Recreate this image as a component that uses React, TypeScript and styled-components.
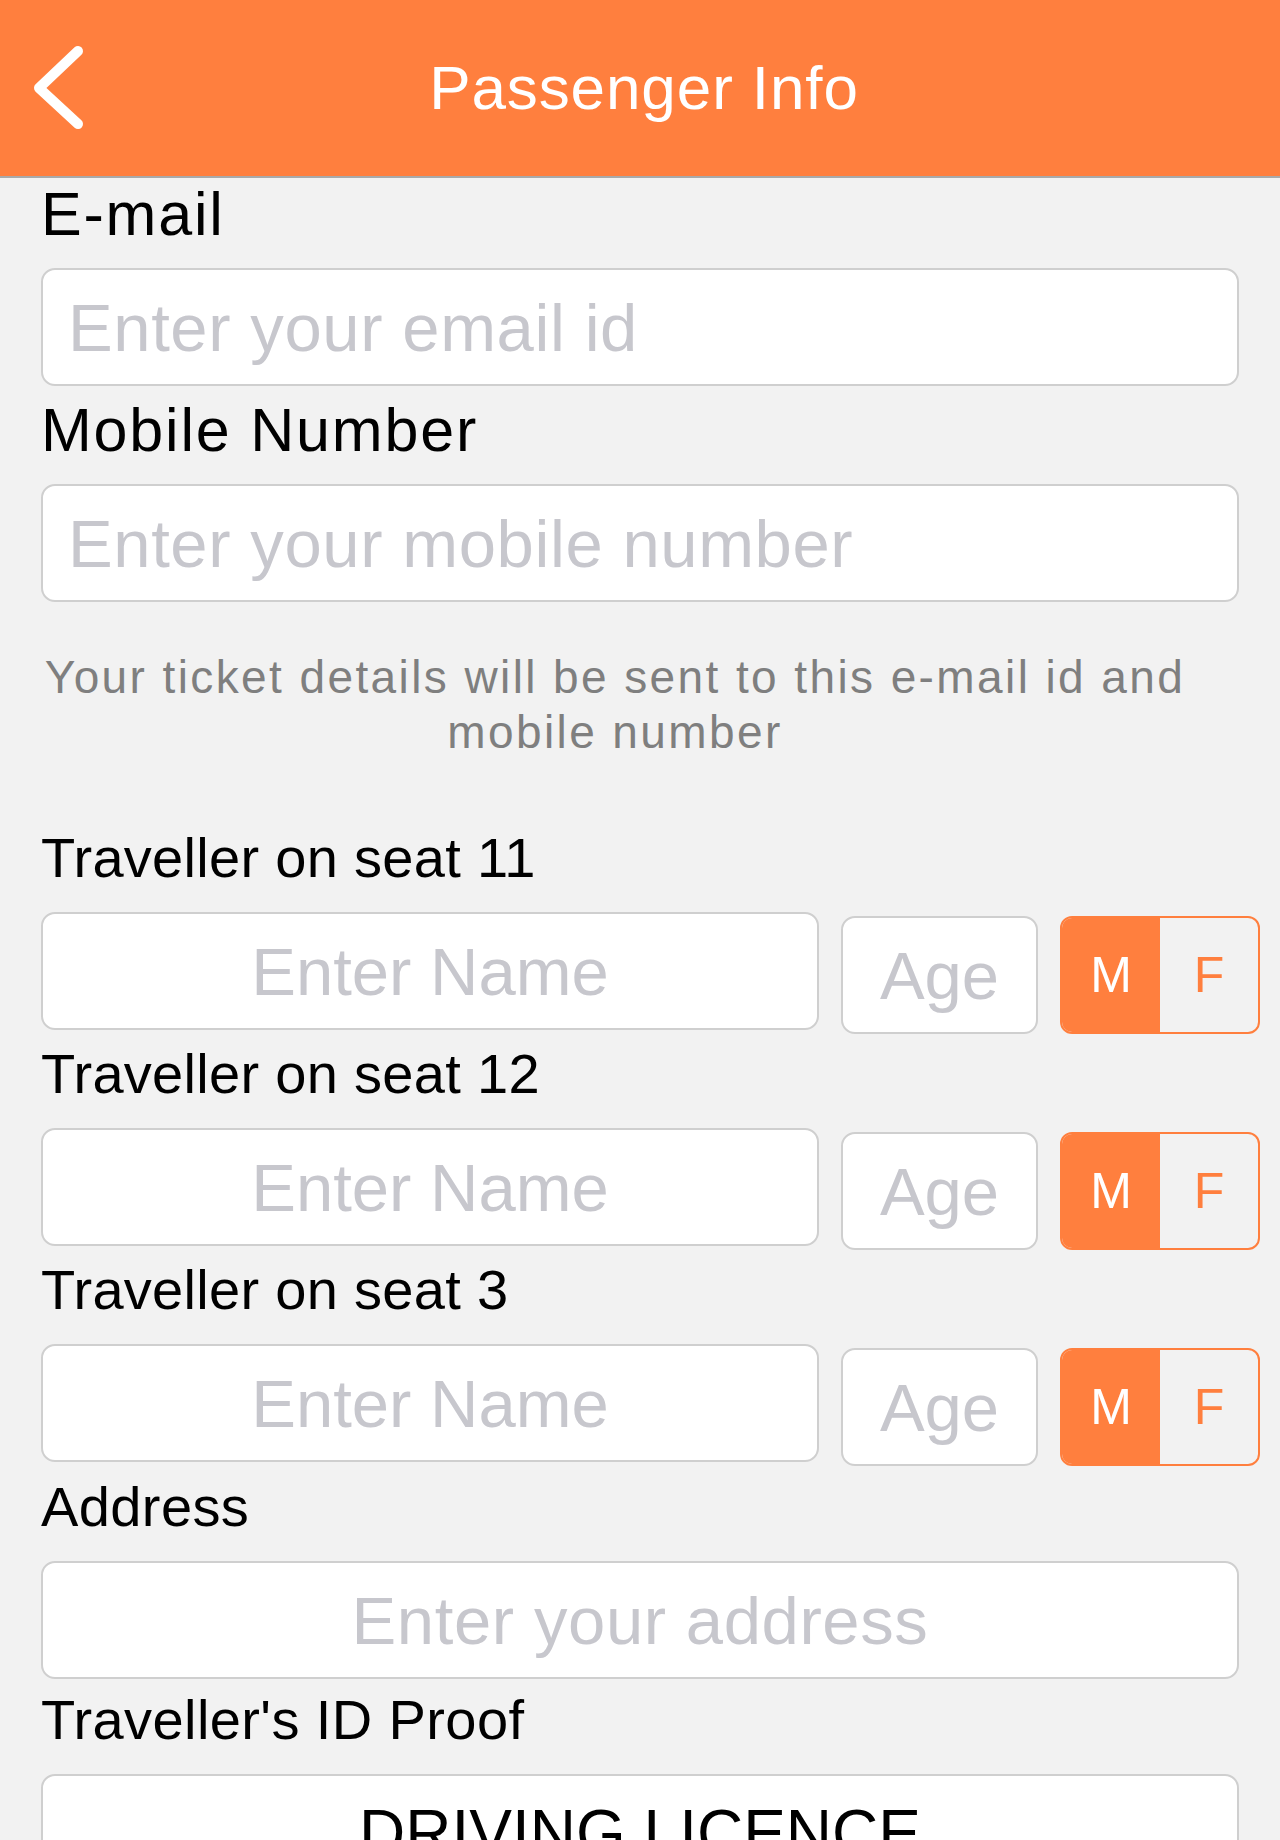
import React from 'react';
import styled, { createGlobalStyle } from 'styled-components';

const ORANGE = '#ff7f3e';

const GlobalStyle = createGlobalStyle`
    body {
        margin: 0;
        background: #f2f2f2;
        font-family: 'Liberation Sans', Arial, sans-serif;
    }
`

const NavBar = styled.header`
    height: 176px;
    background: ${ORANGE};
    border-bottom: 2px solid #a9a9a9;
    display: grid;
    grid-template-columns: 1fr auto 1fr;
    align-items: center;
`

const BackButton = styled.button`
    justify-self: start;
    margin-left: 26px;
    padding: 0;
    border: none;
    background: transparent;
    display: flex;
    cursor: pointer;
`

const Title = styled.h1`
    margin: 0;
    padding-left: 8px;
    font-size: 62px;
    font-weight: 400;
    letter-spacing: 0.9px;
    line-height: 1;
    color: #fff;
`

const Form = styled.main`
    padding: 0 41px;
`

// label sizes: contact fields are a touch larger than the traveller ones
const labelSizes = {
    contact: { size: 61, lh: 70, mt: 9, mb: 19, ls: 1.8 },
    seat: { size: 56, lh: 64, mt: 8, mb: 22, ls: 0.3 },
    detail: { size: 56, lh: 64, mt: 9, mb: 22, ls: 0.4 },
}

type LabelKind = keyof typeof labelSizes

const FieldLabel = styled.label<{ $kind: LabelKind }>`
    display: block;
    font-size: ${p => labelSizes[p.$kind].size}px;
    line-height: ${p => labelSizes[p.$kind].lh}px;
    letter-spacing: ${p => labelSizes[p.$kind].ls}px;
    margin: ${p => labelSizes[p.$kind].mt}px 0 ${p => labelSizes[p.$kind].mb}px;
    color: #000;

    &:first-child {
        margin-top: 1px;
    }
`

const TextInput = styled.input<{ $center?: boolean }>`
    display: block;
    box-sizing: border-box;
    width: 100%;
    height: 118px;
    padding: 0 25px;
    border: 2px solid #cfcfcf;
    border-radius: 14px;
    background: #fff;
    font-family: inherit;
    font-size: 67px;
    letter-spacing: 0.6px;
    color: #000;
    text-align: ${p => (p.$center ? 'center' : 'left')};
    outline: none;

    &::placeholder {
        color: #c7c7cd;
    }
`

const Note = styled.p`
    margin: 48px 50px 66px 0;
    font-size: 46px;
    line-height: 55px;
    letter-spacing: 2.4px;
    color: #7f7f7f;
    text-align: center;
`

const TravellerRow = styled.div`
    display: flex;
    align-items: flex-start;
    gap: 22px;
    margin-right: -21px;
`

const NameInput = styled(TextInput)`
    flex: 1;
    min-width: 0;
    padding: 0;
    letter-spacing: 0;
`

const AgeInput = styled(TextInput)`
    width: 197px;
    flex: none;
    margin-top: 4px;
    padding: 0;
    letter-spacing: 0;
`

const GenderToggle = styled.div`
    box-sizing: border-box;
    width: 200px;
    height: 118px;
    margin-top: 4px;
    flex: none;
    display: flex;
    border: 2px solid ${ORANGE};
    border-radius: 12px;
    overflow: hidden;
`

const GenderOption = styled.button<{ $active?: boolean }>`
    flex: 1;
    border: none;
    padding: 0;
    background: ${p => (p.$active ? ORANGE : 'transparent')};
    color: ${p => (p.$active ? '#fff' : ORANGE)};
    font-family: inherit;
    font-size: 50px;
    cursor: pointer;
`

const IdProofSelect = styled.button`
    display: block;
    box-sizing: border-box;
    width: 100%;
    height: 118px;
    border: 2px solid #cfcfcf;
    border-radius: 14px;
    background: #fff;
    font-family: inherit;
    font-size: 64px;
    color: #000;
    margin-bottom: 40px;
`

const seats = ['11', '12', '3']

const Traveller = ({ seat }: { seat: string }) => (
    <>
        <FieldLabel $kind="seat">Traveller on seat {seat}</FieldLabel>
        <TravellerRow>
            <NameInput $center placeholder="Enter Name" />
            <AgeInput $center placeholder="Age" />
            <GenderToggle>
                <GenderOption $active>M</GenderOption>
                <GenderOption>F</GenderOption>
            </GenderToggle>
        </TravellerRow>
    </>
)

export default function App() {
    return (
        <>
            <GlobalStyle />
            <NavBar>
                <BackButton aria-label="Back">
                    <svg width="60" height="90" viewBox="0 0 60 90">
                        <path d="M52 8 L13 45 L52 81" fill="none" stroke="#fff" strokeWidth="10" strokeLinecap="round" strokeLinejoin="round" />
                    </svg>
                </BackButton>
                <Title>Passenger Info</Title>
                <div />
            </NavBar>
            <Form>
                <FieldLabel $kind="contact">E-mail</FieldLabel>
                <TextInput placeholder="Enter your email id" />
                <FieldLabel $kind="contact">Mobile Number</FieldLabel>
                <TextInput placeholder="Enter your mobile number" />
                <Note>
                    Your ticket details will be sent to this e-mail id and
                    <br />
                    mobile number
                </Note>
                {seats.map(s => <Traveller key={s} seat={s} />)}
                <FieldLabel $kind="detail">Address</FieldLabel>
                <TextInput $center placeholder="Enter your address" />
                <FieldLabel $kind="detail">Traveller's ID Proof</FieldLabel>
                <IdProofSelect>DRIVING LICENCE</IdProofSelect>
            </Form>
        </>
    )
}
